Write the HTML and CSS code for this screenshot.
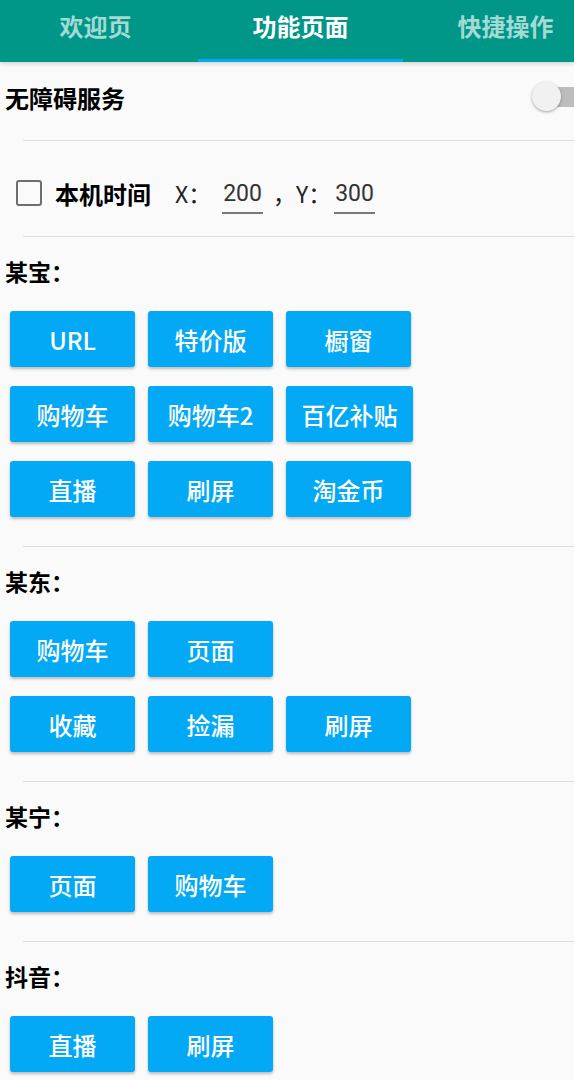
FILE: index.html
```html
<!DOCTYPE html>
<html lang="zh-CN">
<head>
    <meta charset="UTF-8">
    <meta name="viewport" content="width=device-width, initial-scale=1.0">
    <title>功能页面</title>
    <link rel="stylesheet" href="styles.css">
</head>
<body>
    <div class="tab-bar">
        <div class="tabs">
            <div class="tab">欢迎页</div>
            <div class="tab active">功能页面</div>
            <div class="tab">快捷操作</div>
        </div>
    </div>

    <div class="content">
        <div class="switch-row">
            <span class="row-title">无障碍服务</span>
            <div class="switch">
                <div class="switch-track"></div>
                <div class="switch-thumb"></div>
            </div>
        </div>
        <div class="divider"></div>

        <div class="time-row">
            <span class="checkbox"></span>
            <span class="time-label">本机时间</span>
            <span class="coord">X：</span>
            <span class="coord-input">200</span>
            <span class="coord">，Y：</span>
            <span class="coord-input y-input">300</span>
        </div>
        <div class="divider"></div>

        <div class="section">
            <div class="section-title">某宝：</div>
            <div class="btn-rows">
                <div class="btn-row">
                    <button class="action-btn">URL</button>
                    <button class="action-btn">特价版</button>
                    <button class="action-btn">橱窗</button>
                </div>
                <div class="btn-row">
                    <button class="action-btn">购物车</button>
                    <button class="action-btn">购物车2</button>
                    <button class="action-btn wide">百亿补贴</button>
                </div>
                <div class="btn-row">
                    <button class="action-btn">直播</button>
                    <button class="action-btn">刷屏</button>
                    <button class="action-btn">淘金币</button>
                </div>
            </div>
        </div>
        <div class="divider"></div>

        <div class="section">
            <div class="section-title">某东：</div>
            <div class="btn-rows">
                <div class="btn-row">
                    <button class="action-btn">购物车</button>
                    <button class="action-btn">页面</button>
                </div>
                <div class="btn-row">
                    <button class="action-btn">收藏</button>
                    <button class="action-btn">捡漏</button>
                    <button class="action-btn">刷屏</button>
                </div>
            </div>
        </div>
        <div class="divider"></div>

        <div class="section">
            <div class="section-title">某宁：</div>
            <div class="btn-rows">
                <div class="btn-row">
                    <button class="action-btn">页面</button>
                    <button class="action-btn">购物车</button>
                </div>
            </div>
        </div>
        <div class="divider"></div>

        <div class="section">
            <div class="section-title">抖音：</div>
            <div class="btn-rows">
                <div class="btn-row">
                    <button class="action-btn">直播</button>
                    <button class="action-btn">刷屏</button>
                </div>
            </div>
        </div>
    </div>
</body>
</html>
```

FILE: styles.css
```css
html, body {
    margin: 0;
    padding: 0;
    overflow-x: hidden;
}

body {
    font-family: 'Noto Sans CJK SC', 'Noto Sans', sans-serif;
    background: #fafafa;
    color: #000;
}

.tab-bar {
    background: #009688;
    height: 62px;
    overflow: hidden;
    box-shadow: 0 2px 4px rgba(0, 0, 0, 0.15);
    position: relative;
}

.tabs {
    display: flex;
    margin-left: -7px;
    height: 62px;
}

.tab {
    flex: 0 0 205px;
    text-align: center;
    font-size: 24px;
    font-weight: bold;
    line-height: 52px;
    color: #a3dad4;
    box-sizing: border-box;
}

.tab.active {
    color: #fff;
    border-bottom: 3px solid #03a9f4;
    height: 62px;
}

.switch-row {
    display: flex;
    align-items: center;
    justify-content: space-between;
    height: 70px;
    padding-left: 5px;
    margin-bottom: 8px;
}

.row-title {
    font-size: 24px;
    font-weight: bold;
}

.switch {
    position: relative;
    width: 58px;
    height: 30px;
    margin-right: -16px;
}

.switch-track {
    position: absolute;
    left: 14px;
    top: 5px;
    width: 44px;
    height: 20px;
    border-radius: 10px;
    background: #bdbdbd;
}

.switch-thumb {
    position: absolute;
    left: 0;
    top: 0;
    width: 29px;
    height: 29px;
    border-radius: 50%;
    background: #f1f1f1;
    box-shadow: 0 1px 3px rgba(0, 0, 0, 0.35);
}

.divider {
    height: 1px;
    background: #dedede;
    margin-left: 23px;
}

.time-row {
    display: flex;
    align-items: center;
    height: 86px;
    padding-top: 9px;
    padding-left: 16px;
}

.checkbox {
    width: 22px;
    height: 22px;
    border: 2px solid #6e6e6e;
    border-radius: 3px;
    margin-right: 13px;
}

.time-label {
    font-size: 24px;
    font-weight: bold;
    margin-right: 24px;
}

.coord {
    font-size: 23px;
    color: #222;
}

.coord-input {
    font-family: 'Roboto', sans-serif;
    font-size: 23px;
    color: #333;
    margin: 0 10px 0 11px;
    padding: 0 1px 5px;
    border-bottom: 2px solid #777;
    position: relative;
    top: 4px;
}

.coord-input.y-input {
    margin-left: 3px;
}

.section {
    padding: 19px 0 29px;
}

.section-title {
    font-size: 23px;
    font-weight: bold;
    line-height: 30px;
    padding-left: 5px;
    margin-bottom: 25px;
}

.btn-rows {
    display: flex;
    flex-direction: column;
    gap: 19px;
    padding-left: 10px;
}

.btn-row {
    display: flex;
    gap: 13px;
}

.action-btn {
    width: 125px;
    height: 56px;
    border: none;
    border-radius: 3px;
    background: #03a9f4;
    color: #fff;
    font-family: 'Noto Sans CJK SC', 'Noto Sans', sans-serif;
    font-size: 24px;
    font-weight: 500;
    padding: 0;
    box-shadow: 0 2px 3px rgba(0, 0, 0, 0.25);
}

.action-btn.wide {
    width: 127px;
}
```
